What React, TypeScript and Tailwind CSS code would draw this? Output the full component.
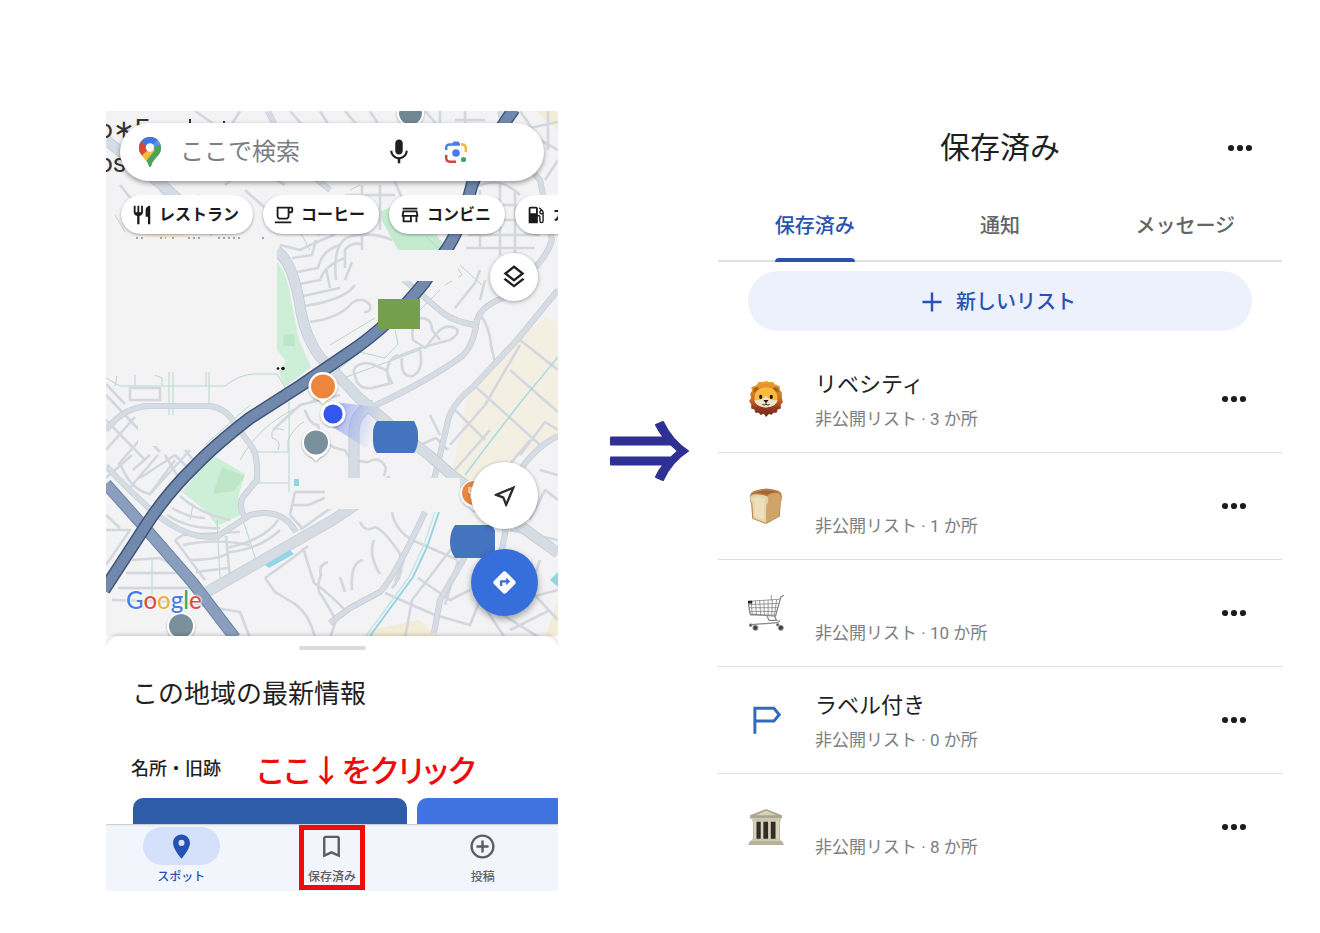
import React from "react";
import {
  MdAddCircleOutline,
  MdBookmarkBorder,
  MdDirections,
  MdLocalGasStation,
  MdMic,
  MdOutlineLayers,
  MdOutlineLocalCafe,
  MdOutlineNearMe,
  MdOutlineStore,
  MdPlace,
  MdRestaurant,
} from "react-icons/md";

/* ---------- Map drawing ---------- */

const MAJOR = [
  "M106 140 L168 190 L215 232 M277 251 Q292 262 299 300 Q303 328 312 344 Q318 357 329 366 L359 398 L389 424 L430 456 L453 476 L530 533 L558 553",
  "M354 484 V432 Q354 412 374 405",
  "M207 592 L333 520 L392 480",
];

const ROADS = [
  "M558 290 L517 340 L473 387 Q450 405 447 425 L434 480",
  "M510 296 Q482 304 477 320 Q474 345 462 356 Q430 380 372 407",
  "M404 280 L443 313 Q455 322 475 325",
  "M106 430 Q125 406 150 406 L210 406 Q226 408 235 424 L252 447 Q258 455 257 480 L243 497 Q238 505 245 518",
  "M106 466 Q150 512 170 524 Q195 540 218 536 L250 515 Q282 507 296 532",
  "M330 623 L350 608 L380 592 Q396 575 425 512",
  "M434 633 L440 600 L466 555 L472 540",
  "M558 436 Q530 450 515 480 L500 560",
  "M500 111 L512 150 L540 180 L552 240 Q545 262 525 275",
  "M268 111 L282 140 L305 170 L330 190",
];

const STREETS = [
  "M106 395 L160 452 M106 420 L145 460 M125 404 L106 384 M106 450 L135 417 M118 465 L148 430 M130 388 V400 H160 V388 Z",
  "M106 478 L132 455 M120 463 Q130 490 150 494 L190 450 M128 490 L158 455 M140 478 L175 455 M150 494 L175 460 M133 470 L150 455",
  "M180 496 Q200 514 230 520 M167 515 Q190 530 220 528 M172 508 Q188 518 205 518 M175 540 L183 535 L240 532 M175 540 L205 580 M183 545 Q215 538 250 545 M190 560 Q220 560 230 552 Q262 548 280 530 M196 572 L228 568 M226 536 L230 578 M226 548 Q265 540 278 520 M230 575 L300 535",
  "M106 530 L130 530 L106 565 M106 515 L120 528 M132 560 L160 558 Q185 570 205 600 M126 573 H178 M118 588 H190 M112 600 L180 602 L240 612 L250 638",
  "M295 492 H325 M295 492 L290 515 M292 505 L308 505 L325 498 M300 530 L335 505 M290 515 L302 528",
  "M265 578 L290 560 L308 546 M265 578 L275 592 L295 604 Q310 615 315 638 M303 548 L314 583 Q325 590 345 610 M328 562 Q318 565 321 575 Q315 590 322 596 L336 620 L330 638",
  "M360 522 Q365 533 375 527 Q385 530 404 560 L395 582 M374 540 Q368 555 380 574 M363 560 Q350 562 352 590 M340 577 L345 592",
  "M392 512 Q395 530 412 540 L458 560 M418 578 L450 600 L470 590 M385 593 L435 615 L470 625 L480 600 L505 638 M400 555 Q405 575 392 588 M458 540 L412 600 L405 638 M458 561 L445 605",
  "M455 410 L485 440 M477 388 L540 445 M510 370 L558 412 M520 340 L558 370 M450 445 L485 405 L520 345 M455 470 L490 430 M520 455 L545 422 L558 430 M530 440 L505 470",
  "M365 363 Q350 366 355 376 Q358 390 372 388 L392 383 L386 370 L372 364 Z M398 355 Q382 362 390 384 M402 358 Q400 378 413 376 Q424 370 420 350 M394 358 L420 348 L450 340 Q462 332 455 328 Q445 324 438 332 L425 348 L413 340 Q410 325 420 318 Q432 318 432 330 L440 340",
  "M482 317 Q490 330 491 345 L495 362 M310 322 Q340 318 352 303 Q362 296 370 305 Q372 312 364 312 M455 308 L475 283 L480 270 M480 300 L485 280",
  "M304 306 Q345 300 355 285 M303 296 L340 288 M300 284 L320 280 Q325 265 345 258 M297 272 L318 268 Q322 250 340 245 M330 288 L326 268 M345 280 L352 262 M292 258 L312 255 L316 240",
  "M280 245 L300 250 Q320 240 335 235 M280 225 Q310 205 340 215 M245 190 L270 212 M225 185 L250 165 L285 185 M240 111 L225 135 L270 130 M195 111 L215 125 M290 111 L305 128 M160 190 L180 210 L200 195 M120 185 L140 210",
  "M320 111 L350 160 M345 111 L370 140 M370 111 L385 135 M345 195 H395 M362 185 V250 M380 185 V230 M395 182 L405 205 M345 210 H380 M336 280 Q332 240 352 236 Q374 232 392 240 M345 268 V250 Q350 242 362 244 M318 235 Q330 225 372 224",
  "M425 111 L440 128 M440 111 V128 M455 120 H485 M465 111 V128 M520 111 L540 140 L558 150 M530 128 L558 122 M548 111 V150 M545 180 L558 160",
  "M465 205 H535 M462 220 H538 M468 235 H540 M466 248 H535 M480 190 V248 M500 182 V255 M515 190 V255 M478 186 Q500 176 520 195",
  "M305 410 Q310 425 318 425 Q322 448 345 450 M420 445 L436 438 L448 450 M430 415 L440 435 M345 450 Q350 462 368 462 Q380 455 386 468 L384 476 M273 430 L300 405 L340 395 M540 470 L558 475 M530 520 L545 490 L558 500 M510 530 L558 540 M540 560 L530 590 L558 620",
  "M510 630 L550 610 M495 610 L540 638 M520 600 L558 590 M475 555 L458 540 M165 455 L180 480 M175 455 L195 475 M185 450 L200 468",
];

const TRAILS = [
  "M106 378 L120 386 H225 Q240 374 255 374 L277 374 L290 395 M117 376 L115 386 M135 375 V386 M155 375 L162 378 V386 M169 372 V415 M173 372 V415 M206 372 V386 M209 372 V405",
  "M335 372 L360 352 L385 358 L398 344 L395 330 M330 345 L375 318 M405 325 L440 290 M338 380 L420 350",
  "M250 483 H288 M289 395 V492 M205 445 L250 405 M240 460 Q262 420 310 402 L335 385 M250 452 H288 V440 Q296 425 304 422 M284 430 Q270 425 272 438 Q282 440 278 450",
  "M217 520 L220 578 M243 520 L256 560 M190 520 L193 505 M152 560 V602",
  "M440 240 L462 275 L445 285 M425 235 L450 260 M460 265 L482 285",
  "M280 195 L310 250 M350 190 L360 185 M115 215 L125 232",
];

const HIGHWAY =
  "M514 109 Q485 150 472 185 Q460 232 444 253 L424 283 Q390 325 350 352 L300 386 L250 418 Q215 445 195 466 Q165 495 143 530 L104 590";
const EXPRESSWAY = "M106 484 L147 530 L193 583 L235 638";

function MapCanvas() {
  return (
    <svg
      className="absolute inset-0 h-full w-full"
      viewBox="106 111 452 528"
      preserveAspectRatio="xMidYMin slice"
      aria-hidden="true"
    >
      <rect x="0" y="0" width="700" height="700" fill="#f3f2f4" />
      <path d="M516 340 L545 318 L558 322 V440 L525 452 L470 480 L450 480 L462 425 L468 395 Z" fill="#f4efe3" />
      <path d="M145 235 L170 230 L200 240 L190 245 H150 Z M535 111 H558 V130 Z M370 630 L420 620 L440 638 H360 Z M558 600 L545 638 H558 Z" fill="#f3ecd6" />
      <path d="M277 262 Q288 275 291 300 L299 340 L311 367 L285 387 L279 372 L286 361 L277 350 Z" fill="#cdeed7" />
      <path d="M284 335 L294 334 L295 346 L283 346 Z" fill="#bce6c9" />
      <path d="M378 213 L415 195 L445 250 L398 250 Z" fill="#c4ebd0" />
      <path d="M212 455 L245 474 L238 497 L243 514 L217 526 L205 510 L182 492 Z" fill="#cdeed7" />
      <path d="M222 467 L245 476 L234 491 L213 494 Z" fill="#bde7c8" />
      <path d="M294 479 H299 V486 H294 Z M550 580 L558 572 V587 Z" fill="#93d5e6" />

      <g fill="none" stroke="#b5dac9" strokeWidth="1">
        {TRAILS.map((d) => (
          <path key={d} d={d} />
        ))}
      </g>
      <g fill="none" strokeLinejoin="round">
        <g stroke="#d3d8de" strokeWidth="2.600">
          {STREETS.map((d) => (
            <path key={d} d={d} />
          ))}
        </g>
        <g stroke="#c2cbd4" strokeWidth="6">
          {ROADS.map((d) => (
            <path key={d} d={d} />
          ))}
        </g>
        <g stroke="#d6dce3" strokeWidth="4.800">
          {ROADS.map((d) => (
            <path key={d} d={d} />
          ))}
        </g>
        <g stroke="#bfcad4" strokeWidth="11">
          {MAJOR.map((d) => (
            <path key={d} d={d} />
          ))}
        </g>
        <g stroke="#d5dce4" strokeWidth="9.600">
          {MAJOR.map((d) => (
            <path key={d} d={d} />
          ))}
        </g>
        <path d="M558 357 L520 403 L490 442 L465 475" stroke="#a5dae4" strokeWidth="1.400" />
        <path d="M439 512 L427 547 L413 577 L370 636" stroke="#8fd3e2" strokeWidth="1.800" />
        <path d="M435 512 L423 547 L409 577 L366 636" stroke="#c4e6e8" strokeWidth="1.400" />
        <path d="M265 565 L290 550 L294 554 L269 568 Z" fill="#93d5e6" />

        <path d={EXPRESSWAY} stroke="#6c84a8" strokeWidth="12" />
        <path d={EXPRESSWAY} stroke="#8a9fbe" strokeWidth="10" />
        <path d={HIGHWAY} stroke="#3e5679" strokeWidth="13" />
        <path d={HIGHWAY} stroke="#7189ad" strokeWidth="10" />
      </g>

      <g fill="#f4f3f4">
        <rect x="106" y="238" width="171" height="134" />
        <rect x="360" y="250" width="98" height="31" />
        <rect x="325" y="478" width="135" height="31" />
        <rect x="106" y="613" width="54" height="26" />
        <rect x="138" y="416" width="64" height="30" />
      </g>

      <path d="M190 119 V127 M224 121 V127" stroke="#333" strokeWidth="2" />
      <path d="M136 238 H144 M160 238 H166 M172 238 H174 M188 238 H200 M218 238 H240 M262 238 H266" stroke="#555" strokeWidth="1" strokeDasharray="2 3" />
      <circle cx="278" cy="368.500" r="1.300" fill="#111" />
      <circle cx="283" cy="368.500" r="1.800" fill="#111" />

      <defs>
        <linearGradient id="beam" x1="333" y1="414" x2="378" y2="428" gradientUnits="userSpaceOnUse">
          <stop offset="0" stopColor="#6c83f3" stopOpacity="0.650" />
          <stop offset="1" stopColor="#8fa4f5" stopOpacity="0" />
        </linearGradient>
        <filter id="pinShadow" x="-30%" y="-30%" width="160%" height="160%">
          <feDropShadow dx="0" dy="1" stdDeviation="1" floodOpacity="0.350" />
        </filter>
      </defs>
      <path d="M333 402 L378 407 Q384 430 366 448 L328 424 Z" fill="url(#beam)" />

      <rect x="378" y="299" width="42" height="30" fill="#759f4d" />
      <path d="M377 421 H414 Q418 428 418 434 V441 Q417 449 414 453 H377 Q373 449 373 440 V433 Q373 426 377 421 Z" fill="#4473c0" />
      <path d="M455 525 H492 L495 531 V553 L493 558 H455 Q450 551 450 542 Q450 532 455 525 Z" fill="#4473c0" />

      <g filter="url(#pinShadow)">
        <path d="M316 429 A14 14 0 0 1 330 443 Q329 453 320 457 L316 461 L312 457 Q303 453 302 443 A14 14 0 0 1 316 429 Z" fill="#fff" />
        <circle cx="316" cy="442.500" r="12" fill="#7a909c" />
        <path d="M323 372 A14.500 14.500 0 0 1 337.500 387 Q336 396 327 400 L323 404 L319 400 Q309 396 308.500 387 A14.500 14.500 0 0 1 323 372 Z" fill="#fff" />
        <circle cx="323" cy="386.500" r="12" fill="#ee853d" />
        <circle cx="333" cy="414" r="12.500" fill="#fff" />
        <circle cx="333" cy="414" r="9.600" fill="#3157f0" />
        <path d="M474 480 A14 14 0 0 0 460 494 Q461 503 470 507 L474 511 L480 505 V480 Z" fill="#fff" />
        <circle cx="474" cy="493" r="12" fill="#e98740" />
        <path d="M469 487 V491 Q469 493 471 493 V499 M471 487 V493 M473 487 V492" fill="none" stroke="#fff" strokeWidth="1.200" />
        <circle cx="410.500" cy="113" r="13.500" fill="#fff" />
        <circle cx="410.500" cy="113" r="11.500" fill="#6f8794" />
        <circle cx="181" cy="626" r="14" fill="#fff" />
        <circle cx="181" cy="626" r="12" fill="#7a909c" />
      </g>
    </svg>
  );
}

/* ---------- Small drawings ---------- */

function MapsPin() {
  return (
    <svg className="h-8 w-6 shrink-0" viewBox="0 0 24 32" aria-hidden="true">
      <defs>
        <clipPath id="mapsPinShape">
          <path d="M12 1 C18 1 23 5.600 23 12 C23 20 15 22 13.200 29.500 C12.800 31.500 11.200 31.500 10.800 29.500 C9 22 1 20 1 12 C1 5.600 6 1 12 1 Z" />
        </clipPath>
      </defs>
      <g clipPath="url(#mapsPinShape)">
        <rect width="24" height="32" fill="#4ba35b" />
        <path d="M0 20 L20 -4 H0 Z" fill="#3f76e4" />
        <path d="M0 3 L12 13 L0 26 Z" fill="#d6493a" />
        <path d="M0 23 L12 12 L17 14 L6 28 Z" fill="#f5b93c" />
        <path d="M10 0 H24 L14 12 L9 8 Z" fill="#3f76e4" />
        <path d="M20 3 L12 12 L24 8 Z" fill="#5d92ef" />
        <path d="M24 6 L5 30 L24 32 Z" fill="#4ba35b" />
      </g>
      <circle cx="12" cy="11.500" r="4.200" fill="#fff" />
    </svg>
  );
}

function LensIcon() {
  return (
    <svg className="h-6 w-6" viewBox="0 0 24 24" fill="none" strokeWidth="2.400" aria-hidden="true">
      <path d="M2.200 10 V8 Q2.200 4.500 6 4.500 H16" stroke="#4a7de8" />
      <path d="M8 4.500 L9.500 1.500 H14.500 L16 4.500 Z" fill="#4a7de8" />
      <path d="M17 4.500 H18 Q21.800 4.500 21.800 8 V12" stroke="#f0b43c" />
      <path d="M2.200 15 V18 Q2.200 21.700 6 21.700 H12" stroke="#d0453a" />
      <circle cx="12" cy="13" r="3.800" fill="#4a7de8" />
      <circle cx="19.500" cy="19.500" r="2.600" fill="#4ba35b" />
    </svg>
  );
}

function DotsIcon() {
  return (
    <svg className="h-2 w-6" viewBox="0 0 24 8" fill="#1d1d1f" aria-hidden="true">
      <circle cx="3" cy="4" r="3.100" />
      <circle cx="12" cy="4" r="3.100" />
      <circle cx="21" cy="4" r="3.100" />
    </svg>
  );
}

function StepArrow() {
  return (
    <svg className="h-16 w-20" viewBox="0 0 80 64" fill="#2f3192" stroke="#2f3192" strokeWidth="2" strokeLinejoin="round" aria-hidden="true">
      <path d="M1 18.500 H54 Q49 12 46 6 L53 3 Q62 22 78 32 Q62 42 53 61 L46 58 Q49 51 54 45.500 H1 V38.500 H61 L68 32 L61 25.500 H1 Z" />
    </svg>
  );
}

function LionIcon() {
  return (
    <svg viewBox="0 0 34 34" className="h-9 w-9" aria-hidden="true">
      <defs>
        <linearGradient id="mane" x1="0" y1="0" x2="0" y2="1">
          <stop offset="0" stopColor="#f0a02f" />
          <stop offset="0.500" stopColor="#cf6b23" />
          <stop offset="0.750" stopColor="#8f3a20" />
          <stop offset="1" stopColor="#74291b" />
        </linearGradient>
      </defs>
      <path
        d="M14 1 L18 0 L19 1 L24 1 L25 3 L30 5 L30 8 L32 11 L32 16 L33 20 L31 22 L31 26 L28 27 L27 30 L24 30 L22 32 L20 31 L17 34 L15 31 L12 32 L10 30 L7 30 L6 27 L3 26 L3 22 L1 19 L3 16 L2 12 L4 9 L3 6 L8 4 L10 1 Z"
        fill="url(#mane)"
      />
      <path d="M5 11 Q5 5 9 6 L11 8 Z M29 11 Q29 5 25 6 L23 8 Z" fill="#8f6a1f" />
      <path d="M17 6 Q27 6 28 16 Q28 24 17 25 Q6 24 6 16 Q7 6 17 6 Z" fill="#f9bd3b" />
      <path d="M17 14 Q20 19 28 18 Q27 24 17 25 Q7 24 6 18 Q14 19 17 14 Z" fill="#efe3cf" />
      <ellipse cx="12" cy="15" rx="1.500" ry="2" fill="#20130d" />
      <ellipse cx="22" cy="15" rx="1.500" ry="2" fill="#20130d" />
      <path d="M14.500 18 H19.500 L17 21 Z" fill="#25150f" />
      <path d="M17 21 V22 M13.500 22 Q15 23.500 17 22 Q19 23.500 20.500 22" stroke="#25150f" strokeWidth="0.800" fill="none" />
    </svg>
  );
}

function BreadIcon() {
  return (
    <svg viewBox="0 0 34 34" className="h-9 w-9" aria-hidden="true">
      <path d="M2 7 Q3 3 9 2 Q17 -1 26 2 Q32 3 32 8 Q32 12 31 14 L30 27 L17 34 L4 29 L3 15 Q1 11 2 7 Z" fill="#b8834b" />
      <path d="M18 8 Q22 4 29 5 Q32 7 31 12 L29 27 L17 33 Z" fill="#cfa468" />
      <path d="M2 9 Q3 6 8 6 L16 7 Q20 8 19 13 L17.500 16 L17 33 L5 28.500 L4 15 Q2 12 2 9 Z" fill="#e6d4a9" />
      <path d="M4 10 Q9 7 16 10 L15 30 L6.500 27 L6 14 Z" fill="#eddfba" />
      <path d="M5 5 Q16 0 29 4 Q20 4 18 7 Q12 4 5 5 Z" fill="#a5672f" />
    </svg>
  );
}

function CartIcon() {
  return (
    <svg viewBox="0 0 34 34" className="h-9 w-9" fill="none" stroke="#85878a" strokeWidth="0.800" aria-hidden="true">
      <path d="M0 6 L30 4 M0 9 L29 8 M1 12 L28 12 M1 15.500 L27 15.500 M2 19 L26 19 M3 5.500 L4 19 M7 5.500 L8 19 M11 5 L12 19 M15 5 L15.500 19 M19 5 L19 19 M23 4.500 L22.500 19 M27 4.500 L25 19 M22 0 V5" />
      <path d="M0 6 L2 18 L26 20 L31 2 L34 0 M18 20 L20 24 H27 L25 20 M3 28 L28 26 L30 24" strokeWidth="1.200" />
      <rect x="0" y="5.500" width="4" height="2.500" fill="#222" stroke="none" />
      <g fill="#444" stroke="#999">
        <circle cx="7" cy="31" r="2.400" />
        <circle cx="31" cy="31" r="2.400" />
        <circle cx="2.500" cy="28.500" r="1.300" />
        <circle cx="28" cy="28" r="1.200" />
      </g>
    </svg>
  );
}

function LabelIcon() {
  return (
    <svg viewBox="0 0 34 34" className="h-9 w-9" fill="none" stroke="#3568c0" strokeWidth="2.800" aria-hidden="true">
      <path d="M6.500 30 V6 H24.500 L29.500 12 L24.500 18 H6.500" />
    </svg>
  );
}

function TempleIcon() {
  return (
    <svg viewBox="0 0 34 34" className="h-9 w-9" aria-hidden="true">
      <path d="M17 0 L32 6 V9 H2 V6 Z" fill="#aaa58e" />
      <path d="M17 1.500 L27 6 H7 Z" fill="#d6d1bb" />
      <rect x="4" y="9" width="27" height="3" fill="#c9c4ab" />
      <rect x="5" y="12" width="25" height="17" fill="#332b24" />
      <g fill="#d8d3bd">
        <rect x="5" y="11" width="3" height="18" />
        <rect x="12" y="11" width="2.500" height="18" />
        <rect x="19" y="11" width="2.500" height="18" />
        <rect x="26" y="11" width="4" height="18" />
      </g>
      <path d="M4 28 H30 L31 30 H3 Z" fill="#c9c4ab" />
      <path d="M2 30 H32 L34 34 H0 Z" fill="#b8b29a" />
    </svg>
  );
}

/* ---------- Phone: map screen ---------- */

const CATEGORIES = [
  { label: "レストラン", Icon: MdRestaurant },
  { label: "コーヒー", Icon: MdOutlineLocalCafe },
  { label: "コンビニ", Icon: MdOutlineStore },
  { label: "ガソリン", Icon: MdLocalGasStation },
];

function MapScreen() {
  return (
    <section className="flex min-w-0 flex-col overflow-hidden" aria-label="地図">
      <div className="relative h-[525px] overflow-hidden">
        <MapCanvas />
        <div className="absolute -left-2 top-0 text-[26px] leading-9 text-[#333]" aria-hidden="true">
          <p>o∗F</p>
          <p className="leading-8">os</p>
        </div>

        <div className="relative flex flex-col gap-3.5 pt-3">
          <form
            className="mx-3.5 flex h-[58px] items-center rounded-full bg-white pl-[18px] pr-[76px] shadow-[0_2px_5px_rgba(0,0,0,0.4)]"
            onSubmit={(e) => e.preventDefault()}
          >
            <MapsPin />
            <input
              type="search"
              aria-label="ここで検索"
              placeholder="ここで検索"
              className="ml-[18px] min-w-0 flex-1 bg-transparent text-2xl text-[#202124] outline-none placeholder:text-[#7b7e82]"
            />
            <button type="button" aria-label="音声検索" className="mr-[30px] text-[#1f1f1f]">
              <MdMic className="h-[30px] w-[30px]" />
            </button>
            <button type="button" aria-label="カメラ検索">
              <LensIcon />
            </button>
          </form>

          <div className="flex gap-2.5 overflow-hidden pb-2 pl-[15px]">
            {CATEGORIES.map(({ label, Icon }) => (
              <button
                key={label}
                type="button"
                className="flex h-[39px] shrink-0 items-center gap-1.5 rounded-full bg-white pr-3.5 pl-2.5 text-base font-bold whitespace-nowrap text-[#1b1b1b] shadow-[0_1px_3px_rgba(0,0,0,0.35)]"
              >
                <Icon className="h-[22px] w-[22px]" />
                <span>{label}</span>
              </button>
            ))}
          </div>
        </div>

        <button
          type="button"
          aria-label="レイヤ"
          className="absolute right-5 top-[142px] flex h-12 w-12 items-center justify-center rounded-full bg-white text-[#1f1f1f] shadow-[0_1px_4px_rgba(0,0,0,0.35)]"
        >
          <MdOutlineLayers className="h-7 w-7" />
        </button>
        <div className="absolute bottom-5 right-5 flex flex-col gap-5">
          <button
            type="button"
            aria-label="現在地"
            className="flex h-[67px] w-[67px] items-center justify-center rounded-full bg-white text-[#2b2b2b] shadow-[0_1px_4px_rgba(0,0,0,0.35)]"
          >
            <MdOutlineNearMe className="h-7 w-7" />
          </button>
          <button
            type="button"
            aria-label="経路"
            className="flex h-[67px] w-[67px] items-center justify-center rounded-full bg-[#366fdc] text-white shadow-[0_3px_7px_rgba(0,0,0,0.35)]"
          >
            <MdDirections className="h-[27px] w-[27px]" />
          </button>
        </div>
        <p className="absolute bottom-5 left-5 font-['Lato',sans-serif] text-2xl leading-8 font-medium [text-shadow:0_0_2px_white,0_0_2px_white,0_0_3px_white]">
          <span className="text-[#4a7de0]">G</span>
          <span className="text-[#d8503f]">o</span>
          <span className="text-[#e9b43a]">o</span>
          <span className="text-[#4a7de0]">g</span>
          <span className="text-[#4ba35b]">l</span>
          <span className="text-[#d8503f]">e</span>
        </p>
      </div>

      <div className="relative overflow-hidden rounded-t-xl bg-white shadow-[0_-1px_4px_rgba(0,0,0,0.2)]">
        <div className="mx-auto mt-2.5 h-1 w-[67px] rounded-full bg-[#d9dbde]" />
        <h2 className="mt-6 pl-[26px] text-[26px] leading-10 text-[#1f1f1f]">この地域の最新情報</h2>
        <div className="mt-[31px] flex h-12 items-center gap-9 pl-[25px]">
          <h3 className="text-lg font-medium text-[#1f1f1f]">名所・旧跡</h3>
          <p className="whitespace-nowrap pt-1.5 text-[31px] leading-10 font-medium text-[#f00b0b] [font-feature-settings:'palt']">
            ここ↓をクリック
          </p>
        </div>
        <div className="mt-[5px] flex gap-2.5 pl-[27px]">
          <div className="h-[26px] w-[274px] shrink-0 rounded-t-[10px] bg-[#2f5ca8]" />
          <div className="h-[26px] flex-1 rounded-tl-[10px] bg-[#4072e0]" />
        </div>
      </div>

      <nav className="grid h-[67px] grid-cols-3 items-start border-t border-[#d5d9e0] bg-[#f2f5fb] text-xs font-medium text-[#5b5e62]">
        <a href="#spot" className="flex flex-col items-center pt-0.5 text-[#2552b0]">
          <span className="flex h-[38px] w-[77px] items-center justify-center rounded-full bg-[#d5e1fa]">
            <MdPlace className="h-[29px] w-[29px]" />
          </span>
          <span className="mt-1 leading-4">スポット</span>
        </a>
        <a href="#saved" className="mx-auto flex h-[65px] w-[66px] flex-col items-center border-[5px] border-[#f00b0b]">
          <MdBookmarkBorder className="mt-0.5 h-[29px] w-[29px] shrink-0" />
          <span className="mt-2 leading-4 whitespace-nowrap">保存済み</span>
        </a>
        <a href="#post" className="flex flex-col items-center pt-0.5">
          <span className="flex h-[38px] items-center">
            <MdAddCircleOutline className="h-[29px] w-[29px]" />
          </span>
          <span className="mt-1 leading-4">投稿</span>
        </a>
      </nav>
    </section>
  );
}

/* ---------- Phone: saved lists screen ---------- */

const LISTS = [
  { id: "lion", title: "リベシティ", count: 3, Icon: LionIcon },
  { id: "bread", title: "", count: 1, Icon: BreadIcon },
  { id: "cart", title: "", count: 10, Icon: CartIcon },
  { id: "label", title: "ラベル付き", count: 0, Icon: LabelIcon },
  { id: "temple", title: "", count: 8, Icon: TempleIcon },
];

const TABS = ["保存済み", "通知", "メッセージ"];

function SavedScreen() {
  return (
    <section className="min-w-0" aria-label="保存済みリスト">
      <header className="grid h-[74px] grid-cols-[1fr_auto_1fr] items-center px-[30px]">
        <h1 className="col-start-2 text-3xl text-[#1f1f1f]">保存済み</h1>
        <button type="button" aria-label="メニュー" className="justify-self-end">
          <DotsIcon />
        </button>
      </header>

      <div role="tablist" className="grid h-[77px] grid-cols-3 border-b-2 border-[#e0e1e3] px-1 text-xl font-medium text-[#626467]">
        {TABS.map((tab, i) => (
          <button
            key={tab}
            type="button"
            role="tab"
            aria-selected={i === 0}
            className={
              i === 0
                ? "relative -mb-0.5 justify-self-center pt-1 text-[#2a52b0] after:absolute after:inset-x-0 after:bottom-0 after:h-1 after:rounded-t-sm after:bg-[#2a52a8]"
                : "-mb-0.5 justify-self-center pt-1"
            }
          >
            {tab}
          </button>
        ))}
      </div>

      <div className="px-[30px] pt-[9px]">
        <button
          type="button"
          className="flex h-[60px] w-full items-center justify-center gap-3 rounded-full bg-[#ecf1fc] pt-0.5 pr-1 text-xl font-medium text-[#2a52b0]"
        >
          <svg viewBox="0 0 24 24" className="h-6 w-6" stroke="currentColor" strokeWidth="2.400" aria-hidden="true">
            <path d="M12 2.500 V21.500 M2.500 12 H21.500" />
          </svg>
          新しいリスト
        </button>
      </div>

      <ul className="mt-[15px]">
        {LISTS.map(({ id, title, count, Icon }) => (
          <li key={id} className="flex h-[107px] items-center border-b border-[#dedfe1] pl-[30px] pr-9 last:border-b-transparent">
            <Icon />
            <div className="ml-[31px] min-w-0 flex-1 pt-1">
              <h2 className="h-8 text-[22px] leading-8 text-[#1f1f1f]">{title}</h2>
              <p className="pt-1 text-[17px] leading-7 text-[#7b7e81]">非公開リスト · {count} か所</p>
            </div>
            <button type="button" aria-label="その他">
              <DotsIcon />
            </button>
          </li>
        ))}
      </ul>
    </section>
  );
}

export default function App() {
  return (
    <main className="grid min-h-screen grid-cols-[452fr_160fr_564fr] items-start bg-white pl-[106px] pr-[38px] pt-[111px] font-['Roboto','Noto_Sans_CJK_JP',sans-serif]">
      <MapScreen />
      <div className="flex justify-center pl-6 pt-[308px]">
        <StepArrow />
      </div>
      <SavedScreen />
    </main>
  );
}
